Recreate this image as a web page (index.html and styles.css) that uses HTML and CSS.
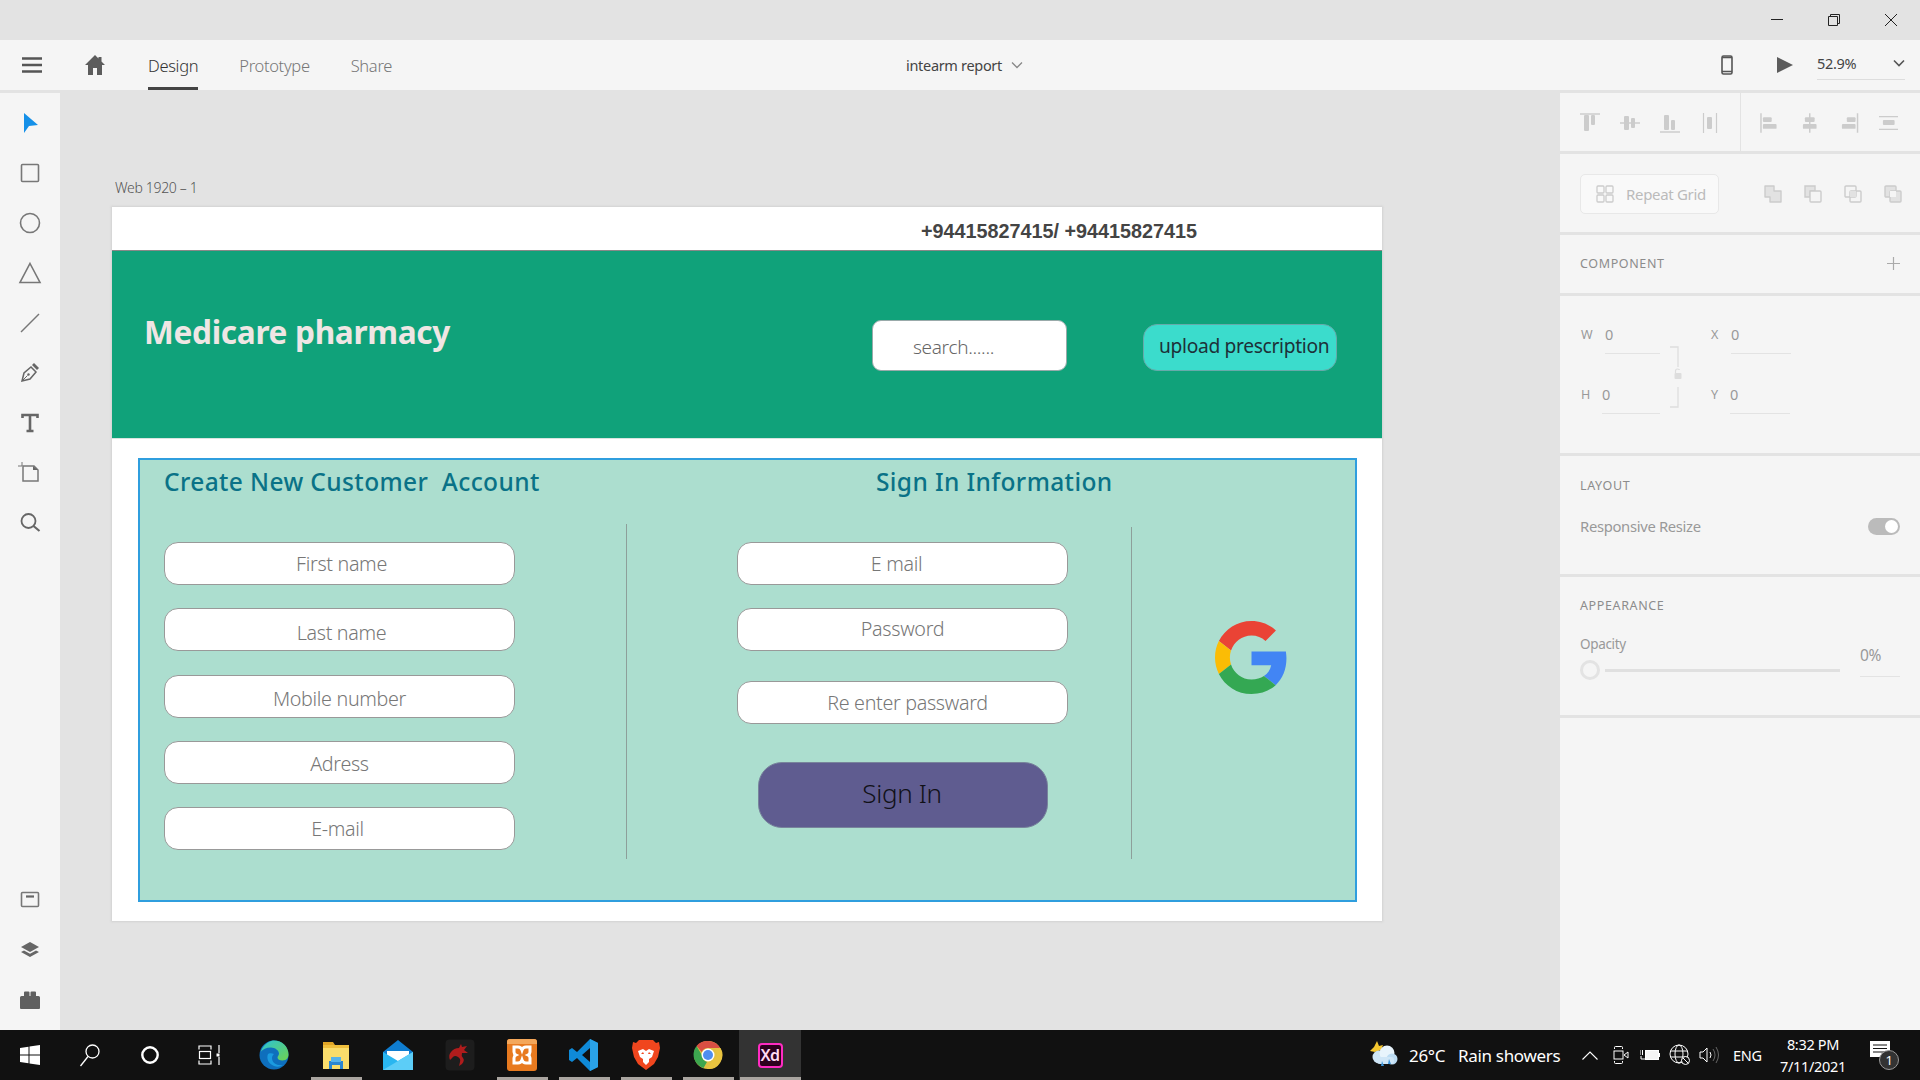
FILE: index.html
```html
<!DOCTYPE html>
<html lang="en">
<head>
<meta charset="utf-8">
<title>intearm report - Adobe XD</title>
<link rel="stylesheet" href="styles.css">
</head>
<body>
<div class="app">
  <header class="titlebar">
    <svg class="win-ctl" width="14" height="14" viewBox="0 0 14 14"><path d="M1 6.5h12" stroke="#222" fill="none"/></svg>
    <svg class="win-ctl" width="14" height="14" viewBox="0 0 14 14"><path d="M1.5 3.5h9v9h-9zM3.5 3.5v-2h9v9h-2" stroke="#222" fill="none"/></svg>
    <svg class="win-ctl" width="14" height="14" viewBox="0 0 14 14"><path d="M1 1l12 12M13 1L1 13" stroke="#222" fill="none"/></svg>
  </header>

  <nav class="topbar">
    <svg class="hamburger" width="20" height="16" viewBox="0 0 20 16"><path d="M0 1.5h20M0 8h20M0 14.5h20" stroke="#555" stroke-width="2.4"/></svg>
    <svg class="home" width="22" height="22" viewBox="0 0 22 22"><path d="M11 1L1 11h3v10h5v-7h4v7h5V11h3l-3.5-3.5V3h-3v1.5z" fill="#5c5c5c"/></svg>
    <div class="tabs">
      <a class="tab tab-active">Design</a>
      <a class="tab">Prototype</a>
      <a class="tab">Share</a>
    </div>
    <div class="doc-title">intearm report
      <svg width="12" height="8" viewBox="0 0 12 8"><path d="M1 1.5l5 5 5-5" stroke="#888" stroke-width="1.3" fill="none"/></svg>
    </div>
    <div class="top-right">
      <svg class="device" width="12" height="20" viewBox="0 0 12 20"><rect x="1" y="1" width="10" height="18" rx="1.5" fill="none" stroke="#555" stroke-width="1.6"/><path d="M1 2.5h10M1 16.5h10" stroke="#555" stroke-width="1.6"/></svg>
      <svg class="play" width="16" height="18" viewBox="0 0 16 18"><path d="M0 1l16 8-16 8z" fill="#5c5c5c"/></svg>
      <div class="zoom-box">52.9%
        <svg width="12" height="8" viewBox="0 0 12 8"><path d="M1 1.5l5 5 5-5" stroke="#555" stroke-width="1.6" fill="none"/></svg>
      </div>
    </div>
  </nav>

  <div class="workspace">
    <aside class="tools">
      <div class="tool-group">
        <svg class="tool" width="24" height="24" viewBox="0 0 24 24"><path d="M6 2L20 14L11 15L6 22z" fill="#1590e8"/></svg>
        <svg class="tool" width="24" height="24" viewBox="0 0 24 24"><rect x="3.5" y="3.5" width="17" height="17" rx="1" fill="none" stroke="#777" stroke-width="1.6"/></svg>
        <svg class="tool" width="24" height="24" viewBox="0 0 24 24"><circle cx="12" cy="12" r="9.5" fill="none" stroke="#777" stroke-width="1.6"/></svg>
        <svg class="tool" width="24" height="24" viewBox="0 0 24 24"><path d="M12 2.5L22 21.5H2z" fill="none" stroke="#777" stroke-width="1.6"/></svg>
        <svg class="tool" width="24" height="24" viewBox="0 0 24 24"><path d="M3 21L21 3" stroke="#777" stroke-width="1.4"/></svg>
        <svg class="tool" width="24" height="24" viewBox="0 0 24 24"><path d="M4 20l2-8 7-6 5 5-6 7z" fill="none" stroke="#666" stroke-width="1.5"/><path d="M14 4l2-2 5 5-2 2z" fill="#666"/><circle cx="10.5" cy="13.5" r="1.2" fill="#666"/><path d="M4 20l5.5-5.5" stroke="#666"/></svg>
        <svg class="tool" width="24" height="24" viewBox="0 0 24 24"><path d="M4.5 7V4h15v3M12 4v16M8.500 20h7" fill="none" stroke="#666" stroke-width="2.6"/></svg>
        <svg class="tool" width="24" height="24" viewBox="0 0 24 24"><path d="M5 5h11l4 4v11H5z" fill="none" stroke="#777" stroke-width="1.5"/><path d="M15 5l5 4h-5z" fill="#666"/><path d="M0 5h4M4 1v4" stroke="#777"/></svg>
        <svg class="tool" width="24" height="24" viewBox="0 0 24 24"><circle cx="10.5" cy="10" r="7" fill="none" stroke="#666" stroke-width="1.8"/><path d="M15.5 15l6 5" stroke="#666" stroke-width="2.2"/></svg>
      </div>
      <div class="tool-group">
        <svg class="tool" width="24" height="24" viewBox="0 0 24 24"><rect x="3.5" y="4.5" width="17" height="14" rx="1" fill="none" stroke="#777" stroke-width="1.6"/><path d="M8 8.500h8" stroke="#666" stroke-width="2.2"/></svg>
        <svg class="tool" width="24" height="24" viewBox="0 0 24 24"><path d="M12 4l9 5-9 5-9-5z" fill="#666"/><path d="M3 14l3-1.5 6 3.3 6-3.3 3 1.5-9 5z" fill="#666"/></svg>
        <svg class="tool" width="24" height="24" viewBox="0 0 24 24"><path d="M2 9.500q0-1.500 1.500-1.500H6V4.500q0-1 1-1h3.500q1 0 1 1V8h1V4.500q0-1 1-1H17q1 0 1 1V8h2.500Q22 8 22 9.500V20q0 1-1 1H3q-1 0-1-1z" fill="#5f5f5f"/></svg>
      </div>
    </aside>

    <main class="canvas">
      <div class="artboard-label">Web 1920 – 1</div>
      <section class="artboard">
        <div class="contact"><span>+94415827415/ +94415827415</span></div>
        <div class="hero">
          <h1 class="brand">Medicare pharmacy</h1>
          <div class="search">search......</div>
          <div class="upload">upload prescription</div>
        </div>
        <div class="form-wrap">
          <div class="form-panel">
            <h2 class="form-heading heading-left">Create New Customer&nbsp; Account</h2>
            <h2 class="form-heading heading-mid">Sign In Information</h2>
            <div class="form-spacer"></div>
            <div class="col col-left">
              <div class="field"><span class="ph ph-first">First name</span></div>
              <div class="field"><span class="ph ph-last">Last name</span></div>
              <div class="field"><span class="ph ph-mobile">Mobile number</span></div>
              <div class="field"><span class="ph ph-adress">Adress</span></div>
              <div class="field"><span class="ph ph-email">E-mail</span></div>
            </div>
            <div class="col col-mid">
              <div class="field field-wide"><span class="ph ph-mail2">E mail</span></div>
              <div class="field field-wide"><span class="ph ph-pass">Password</span></div>
              <div class="field field-wide field-re"><span class="ph ph-re">Re enter passward</span></div>
              <div class="signin"><span class="signin-text">Sign In</span></div>
            </div>
            <div class="col col-right">
              <svg width="73" height="73" viewBox="0 0 48 48">
                <path fill="#EA4335" d="M24 9.5c3.54 0 6.71 1.22 9.21 3.6l6.85-6.85C35.9 2.38 30.47 0 24 0 14.62 0 6.51 5.38 2.56 13.22l7.98 6.19C12.43 13.72 17.74 9.5 24 9.5z"/>
                <path fill="#4285F4" d="M46.98 24.55c0-1.57-.15-3.09-.38-4.55H24v9.02h12.94c-.58 2.96-2.26 5.48-4.78 7.18l7.73 6c4.51-4.18 7.09-10.36 7.09-17.65z"/>
                <path fill="#FBBC05" d="M10.53 28.59c-.48-1.45-.76-2.99-.76-4.59s.27-3.14.76-4.59l-7.98-6.19C.92 16.46 0 20.12 0 24c0 3.88.92 7.54 2.56 10.78l7.97-6.19z"/>
                <path fill="#34A853" d="M24 48c6.48 0 11.93-2.13 15.89-5.81l-7.73-6c-2.15 1.45-4.92 2.3-8.16 2.3-6.26 0-11.57-4.22-13.47-9.91l-7.98 6.19C6.51 42.62 14.62 48 24 48z"/>
              </svg>
            </div>
          </div>
        </div>
      </section>
    </main>

    <aside class="inspector">
      <div class="sec sec-align">
        <div class="align-group">
          <svg class="ic" width="20" height="20" viewBox="0 0 20 20"><path d="M0 1h20" stroke="#ccc" stroke-width="1.5"/><rect x="4" y="2" width="5" height="16" rx="1" fill="#ccc"/><rect x="11" y="2" width="4" height="10" rx="1" fill="#ccc"/></svg>
          <svg class="ic" width="20" height="20" viewBox="0 0 20 20"><path d="M0 10h20" stroke="#ccc" stroke-width="1.5"/><rect x="4" y="3" width="5" height="14" rx="1" fill="#ccc"/><rect x="11" y="5" width="4" height="10" rx="1" fill="#ccc"/></svg>
          <svg class="ic" width="20" height="20" viewBox="0 0 20 20"><path d="M0 19h20" stroke="#ccc" stroke-width="1.5"/><rect x="4" y="2" width="5" height="15" rx="1" fill="#ccc"/><rect x="11" y="7" width="4" height="10" rx="1" fill="#ccc"/></svg>
          <svg class="ic" width="20" height="20" viewBox="0 0 20 20"><path d="M3.5 0v20M16.5 0v20" stroke="#ccc" stroke-width="1.2"/><rect x="7" y="4" width="5" height="12" rx="1" fill="#ccc"/></svg>
        </div>
        <div class="align-group align-group-right">
          <svg class="ic" width="20" height="20" viewBox="0 0 20 20"><path d="M1 0v20" stroke="#ccc" stroke-width="1.5"/><rect x="3" y="4" width="9" height="5" rx="1" fill="#ccc"/><rect x="3" y="11" width="14" height="5" rx="1" fill="#ccc"/></svg>
          <svg class="ic" width="20" height="20" viewBox="0 0 20 20"><path d="M10 0v20" stroke="#ccc" stroke-width="1.5"/><rect x="5" y="4" width="10" height="5" rx="1" fill="#ccc"/><rect x="3" y="11" width="14" height="5" rx="1" fill="#ccc"/></svg>
          <svg class="ic" width="20" height="20" viewBox="0 0 20 20"><path d="M19 0v20" stroke="#ccc" stroke-width="1.5"/><rect x="8" y="4" width="9" height="5" rx="1" fill="#ccc"/><rect x="3" y="11" width="14" height="5" rx="1" fill="#ccc"/></svg>
          <svg class="ic" width="20" height="20" viewBox="0 0 20 20"><path d="M0 3.5h20M0 16.5h20" stroke="#ccc" stroke-width="1.2"/><rect x="4" y="7" width="12" height="5" rx="1" fill="#ccc"/></svg>
        </div>
      </div>

      <div class="sec sec-grid">
        <div class="repeat">
          <svg width="18" height="18" viewBox="0 0 18 18"><g fill="none" stroke="#ccc" stroke-width="1.3"><rect x="1" y="1" width="7" height="7" rx="1"/><rect x="10" y="1" width="7" height="7" rx="1"/><rect x="1" y="10" width="7" height="7" rx="1"/><rect x="10" y="10" width="7" height="7" rx="1"/></g></svg>
          Repeat Grid
        </div>
        <div class="bools">
          <svg class="ic" width="20" height="20" viewBox="0 0 20 20"><path d="M2 2h9v5h7v11H7v-5H2z" fill="#e2e2e2" stroke="#ccc" stroke-width="1.4" stroke-linejoin="round"/></svg>
          <svg class="ic" width="20" height="20" viewBox="0 0 20 20"><path d="M2 2h10v5H7v6H2z" fill="#e2e2e2" stroke="#ccc" stroke-width="1.4"/><rect x="7" y="7" width="11" height="11" rx="1" fill="#f5f5f5" stroke="#ccc" stroke-width="1.4"/></svg>
          <svg class="ic" width="20" height="20" viewBox="0 0 20 20"><g fill="none" stroke="#ccc" stroke-width="1.4"><rect x="2" y="2" width="11" height="11" rx="1"/><rect x="7" y="7" width="11" height="11" rx="1"/></g><rect x="7" y="7" width="6" height="6" fill="#e2e2e2"/></svg>
          <svg class="ic" width="20" height="20" viewBox="0 0 20 20"><rect x="2" y="2" width="11" height="11" rx="1" fill="#e2e2e2" stroke="#ccc" stroke-width="1.4"/><rect x="7" y="7" width="11" height="11" rx="1" fill="#e2e2e2" stroke="#ccc" stroke-width="1.4"/><rect x="7" y="7" width="6" height="6" fill="#f5f5f5"/></svg>
        </div>
      </div>

      <div class="sec sec-component">
        <span class="sec-label">COMPONENT</span>
        <svg width="13" height="13" viewBox="0 0 13 13"><path d="M6.5 0v13M0 6.5h13" stroke="#aaa" stroke-width="1.2"/></svg>
      </div>

      <div class="sec sec-transform">
        <div class="tf-field"><span class="tf-label tf-w">W</span><span class="tf-val tf-val-a">0</span></div>
        <div class="tf-field"><span class="tf-label tf-x">X</span><span class="tf-val tf-val-b">0</span></div>
        <div class="tf-field"><span class="tf-label tf-h">H</span><span class="tf-val tf-val-c">0</span></div>
        <div class="tf-field"><span class="tf-label tf-y">Y</span><span class="tf-val tf-val-b">0</span></div>
        <svg class="tf-lock" width="22" height="62" viewBox="0 0 22 62"><path d="M10 1h8v20M18 41v20h-8" fill="none" stroke="#ddd" stroke-width="1.3"/><rect x="14.5" y="27" width="7" height="6" rx="1" fill="#ddd"/><path d="M15.5 27v-2q0-2 2-2t2 1" fill="none" stroke="#ddd" stroke-width="1.2"/></svg>
      </div>

      <div class="sec sec-layout">
        <span class="sec-label">LAYOUT</span>
        <div class="row-between">
          <span class="resp">Responsive Resize</span>
          <span class="toggle"><span class="knob"></span></span>
        </div>
      </div>

      <div class="sec sec-appearance">
        <span class="sec-label">APPEARANCE</span>
        <span class="opacity">Opacity</span>
        <div class="slider-row">
          <span class="slider-knob"></span>
          <span class="slider-track"></span>
          <span class="opacity-val">0%</span>
        </div>
      </div>
    </aside>
  </div>

  <footer class="taskbar">
    <div class="task-cell task-narrow"><svg width="20" height="20" viewBox="0 0 20 20"><path d="M0 3l8.5-1.2v7.700H0zM9.5 1.600L20 0v9.5H9.5zM0 10.5h8.5v7.700L0 17zM9.5 10.5H20V20L9.5 18.400z" fill="#fff"/></svg></div>
    <div class="task-cell task-narrow"><svg width="22" height="24" viewBox="0 0 22 24"><circle cx="13.5" cy="8.5" r="6.5" fill="none" stroke="#fff" stroke-width="1.3"/><path d="M9 13.500L1.500 23" stroke="#fff" stroke-width="1.3"/></svg></div>
    <div class="task-cell task-narrow"><svg width="20" height="20" viewBox="0 0 20 20"><circle cx="10" cy="10" r="7.7" fill="none" stroke="#fff" stroke-width="2.4"/></svg></div>
    <div class="task-cell task-view"><svg class="taskview-ic" width="22" height="20" viewBox="0 0 22 20"><path d="M1 4.5V1h12v3.500M1 15.500V19h12v-3.500M21 0v8M21 12v8" fill="none" stroke="#fff" stroke-width="1.2"/><rect x="1.5" y="6.5" width="11" height="7" fill="none" stroke="#fff" stroke-width="1.2"/><rect x="18.500" y="8.500" width="3" height="3" fill="#fff"/></svg></div>

    <div class="task-cell"><svg width="30" height="30" viewBox="0 0 30 30"><defs><linearGradient id="edgeA" x1="0" y1="0" x2="1" y2="1"><stop offset="0" stop-color="#2bc2d8"/><stop offset="1" stop-color="#6fd44e"/></linearGradient></defs><circle cx="15" cy="15" r="14.500" fill="#0e6fbd"/><path d="M2 11C5 3 12 .5 15 .5c8 0 14.500 6 14.500 14 0 3-2 6-6 6-3 0-5-1-5-3 0-1.500 1.500-2 1.500-4 0-3-4-6-8-6-5 0-8 2-10 4z" fill="url(#edgeA)"/><path d="M9 14c-2 5 1 10 6 12 3 1 6 1 9-1-6 1-11-2-11-7 0-2 1-3 2-4-2-1-5-1-6 0z" fill="#1a9be0"/></svg></div>
    <div class="task-cell task-open"><svg width="28" height="30" viewBox="0 0 28 30"><path d="M1 2h10l2 3H1z" fill="#e0a526"/><path d="M1 5h26v24H1z" fill="#fadd6b"/><path d="M1 5h26v3H1z" fill="#f0bf3c"/><path d="M7 29v-8h14v8h-3v-4h-8v4z" fill="#2d86cf"/><rect x="9" y="17" width="10" height="5" fill="#57b3ea"/></svg></div>
    <div class="task-cell"><svg width="30" height="30" viewBox="0 0 30 30"><path d="M15 0l15 12v18H0V12z" fill="#0f7dd0"/><path d="M4 11h22v5l-11 6-11-6z" fill="#fff"/><path d="M0 12l15 9 15-9v18H0z" fill="#29b6f0"/><path d="M30 12v18H0z" fill="#5ccdf7"/></svg></div>
    <div class="task-cell"><svg width="30" height="32" viewBox="0 0 30 32"><rect x="0.5" y="0.500" width="29" height="31" rx="4" fill="#1d1d1d"/><path d="M6 13q3-4 8-4l2-4 1 3 5-1-3 4 4 3-6 0q-1 3 1 5t-1 6l-3 2 1-4q1-3-2-5t-5 0l-3 3q-2-5 1-8z" fill="#b01c1c"/></svg></div>
    <div class="task-cell task-open"><svg width="30" height="32" viewBox="0 0 30 32"><rect width="30" height="32" rx="3" fill="#e87a1f"/><path d="M0 3q0-3 3-3h24q3 0 3 3v2H0z" fill="#f4a75a"/><path d="M7 8h4q3 0 4 3 1-3 4-3h4v5q0 2-2 3 2 1 2 3v5h-4q-3 0-4-3-1 3-4 3H7v-5q0-2 2-3-2-1-2-3z" fill="none" stroke="#fff" stroke-width="3"/></svg></div>
    <div class="task-cell task-open"><svg width="30" height="32" viewBox="0 0 30 32"><path d="M21 0l8 4v24l-8 4-13-13-5 4-3-2V11l3-2 5 4zM21 9l-8 7 8 7z" fill="#0f8ad8" fill-rule="evenodd"/><path d="M21 0l8 4v24l-8 4z" fill="#2aa3ea"/></svg></div>
    <div class="task-cell task-open"><svg width="28" height="32" viewBox="0 0 28 32"><path d="M7 1h14l3 3 3-1 1 6-2 9-4 7-8 6-8-6-4-7-2-9 1-6 3 1z" fill="#f0461e"/><path d="M6 12l5-2 3 2 3-2 5 2-2 6-3 2v3l-3 3-3-3v-3l-3-2z" fill="#fff"/><path d="M11 13l-2 2h3zM17 13l2 2h-3z" fill="#f0461e"/></svg></div>
    <div class="task-cell task-open"><svg width="30" height="30" viewBox="0 0 30 30"><circle cx="15" cy="15" r="14" fill="#e2c042"/><path d="M15 1a14 14 0 0 1 12.100 7H15a7 7 0 0 0-6.300 4L3.500 6A14 14 0 0 1 15 1z" fill="#d94f43"/><path d="M3.500 6l5.600 9.600A7 7 0 0 0 14 22l-3.500 6A14 14 0 0 1 3.500 6z" fill="#3da64f"/><path d="M14 29l6-9a7 7 0 0 0 1-12h6.500A14 14 0 0 1 14 29z" fill="#e9c33f"/><circle cx="15" cy="15" r="6.5" fill="#fff"/><circle cx="15" cy="15" r="5" fill="#4f8ef0"/></svg></div>
    <div class="task-cell task-xd"><span class="xd-logo">Xd</span></div>

    <div class="tray">
      <svg class="tray-weather" width="30" height="30" viewBox="0 0 30 30"><path d="M8 1l2 5 4-1-2 5-6 2-5-1 4-4z" fill="#f3c62f"/><circle cx="10" cy="17" r="6.5" fill="#cfe6f7"/><circle cx="18" cy="13" r="7.5" fill="#e8f4fc"/><circle cx="23" cy="19" r="5.5" fill="#bcdcf3"/><rect x="8" y="17" width="17" height="7" rx="3" fill="#cfe6f7"/><path d="M13 21l2 5h-3zM20 19l2 5h-3z" fill="#3c96dc"/></svg>
      <span class="tray-temp">26°C</span>
      <span class="tray-weather-text">Rain showers</span>
      <svg class="tray-chevron" width="16" height="9" viewBox="0 0 16 9"><path d="M.5 8.500L8 1l7.500 7.500" stroke="#fff" fill="none" stroke-width="1.1"/></svg>
      <svg class="tray-meet" width="16" height="20" viewBox="0 0 16 20"><path d="M1.500 4V2.500q0-1 1-1h6q1 0 1 1V4M1.500 16v1.500q0 1 1 1h6q1 0 1-1V16" stroke="#fff" fill="none"/><rect x="1" y="6" width="9" height="8" fill="none" stroke="#fff"/><path d="M11 10l4-3v6z" fill="none" stroke="#fff"/></svg>
      <svg class="tray-battery" width="20" height="14" viewBox="0 0 20 14"><path d="M0 2v5M2.500 2v5M1 8v3h5" stroke="#fff" fill="none"/><rect x="5.500" y="2.500" width="13" height="9" fill="#f5f5f5" stroke="#fff"/><rect x="18.500" y="5" width="1.500" height="4" fill="#fff"/></svg>
      <svg class="tray-globe" width="22" height="22" viewBox="0 0 22 22"><g fill="none" stroke="#fff"><circle cx="10" cy="10" r="9"/><ellipse cx="10" cy="10" rx="4" ry="9"/><path d="M1.500 7h17M1.500 13h17"/></g><circle cx="16.500" cy="16.500" r="4" fill="#111" stroke="#fff"/><path d="M14 14l5 5" stroke="#fff"/></svg>
      <svg class="tray-volume" width="22" height="20" viewBox="0 0 22 20"><path d="M1 7h3l4-4v14l-4-4H1z" fill="none" stroke="#fff"/><path d="M11 7q2 3 0 6" fill="none" stroke="#fff"/><path d="M14 4q4 6 0 12M17 2q5 8 0 16" fill="none" stroke="#666"/></svg>
      <span class="tray-lang">ENG</span>
      <div class="clock"><span>8:32 PM</span><span>7/11/2021</span></div>
      <div class="notif">
        <svg width="20" height="17" viewBox="0 0 20 17"><path d="M0 0h20v16H0z" fill="#fff"/><path d="M3 4h14M3 7.500h14M3 11h14" stroke="#111" stroke-width="1.2"/></svg>
        <span class="notif-badge">1</span>
      </div>
    </div>
  </footer>
</div>
</body>
</html>
```

FILE: styles.css
```css
* { box-sizing: border-box; }
html, body { margin: 0; padding: 0; }
body {
  width: 1920px;
  height: 1080px;
  overflow: hidden;
  font-family: "Noto Sans", "Open Sans", sans-serif;
  letter-spacing: -0.02em;
  color: #444;
}
.app { display: flex; flex-direction: column; height: 1080px; background: #e3e3e3; }

/* title bar */
.titlebar {
  height: 40px;
  flex: none;
  background: #e3e3e3;
  display: flex;
  justify-content: flex-end;
  align-items: center;
  gap: 43px;
  padding-right: 22px;
}

/* top bar */
.topbar {
  height: 50px;
  flex: none;
  background: #f5f5f5;
  display: flex;
  align-items: center;
}
.hamburger { margin-left: 22px; }
.home { margin-left: 42px; }
.tabs { display: flex; margin-left: 42px; align-self: stretch; }
.tab {
  display: flex;
  align-items: center;
  font-size: 16.5px;
  font-weight: 300;
  color: #777;
  margin-right: 41px;
  border-bottom: 3px solid transparent;
  padding-top: 4px;
}
.tab-active { color: #333; border-bottom-color: #444; }
.doc-title {
  margin-left: 473px;
  font-size: 14.5px;
  color: #444;
  display: flex;
  align-items: center;
  gap: 9px;
}
.top-right { margin-left: auto; display: flex; align-items: center; }
.device { margin-right: 44px; }
.play { margin-right: 24px; }
.zoom-box {
  width: 88px;
  height: 30px;
  margin-right: 15px;
  border-bottom: 1px solid #ddd;
  font-size: 14.5px;
  color: #444;
  display: flex;
  justify-content: space-between;
  align-items: center;
  padding-bottom: 3px;
}

.workspace { flex: 1; display: flex; margin-top: 3px; min-height: 0; }

/* left tools */
.tools {
  width: 60px;
  flex: none;
  background: #f5f5f5;
  display: flex;
  flex-direction: column;
  justify-content: space-between;
  padding: 18px 0;
}
.tool-group { display: flex; flex-direction: column; align-items: center; gap: 26px; }
.tool { display: block; }

/* canvas */
.canvas { flex: 1; padding: 86px 0 0 52px; }
.artboard-label { font-size: 14px; font-weight: 300; color: #555; height: 28px; margin-left: 3px; line-height: 18px; }
.artboard {
  width: 1270px;
  height: 714px;
  background: #fff;
  box-shadow: 0 0 2px 1px #d2d2d2;
}
.contact {
  height: 44px;
  border-bottom: 1px solid #888;
  padding-left: 809px;
  font-family: "Liberation Sans", Arial, sans-serif;
  font-weight: 700;
  font-size: 19.8px;
  letter-spacing: 0;
  line-height: 48px;
  color: #444;
}
.hero {
  height: 188px;
  background: #10a27a;
  display: flex;
  align-items: flex-start;
  padding: 69px 45px 0 32px;
  border-bottom: 1px solid #d9e4e0;
}
.brand {
  margin: -3px 0 0;
  font-size: 31.6px;
  line-height: 30px;
  font-weight: 700;
  color: #efe6e4;
}
.search {
  margin-left: auto;
  width: 195px;
  height: 51px;
  background: #fff;
  border: 1px solid #9aa;
  border-radius: 9px;
  font-size: 19px;
  font-weight: 300;
  color: #666;
  padding: 12px 0 0 40px;
  line-height: 28px;
}
.upload {
  width: 194px;
  height: 47px;
  margin: 4px 0 0 76px;
  background: #3bdccc;
  border: 1px solid #6aa;
  border-radius: 14px;
  font-size: 19.2px;
  color: #1d3138;
  padding-left: 15px;
  line-height: 42px;
}

/* form */
.form-wrap { padding: 19px 25px 0 26px; }
.form-panel {
  height: 444px;
  background: #acdecf;
  border: 2px solid #2f9ede;
  display: grid;
  grid-template-columns: 486px 505px 1fr;
  grid-template-rows: 64px 335px;
}
.form-heading {
  margin: 0;
  font-size: 24.5px;
  font-weight: 500;
  letter-spacing: 0.016em;
  color: #0a7287;
  line-height: 44px;
}
.heading-left { padding-left: 24px; }
.heading-mid { padding-left: 250px; }
.col { display: flex; flex-direction: column; }
.col-left { padding: 18px 0 0 24px; gap: 23.25px; }
.col-mid { border-left: 1px solid #8d9f9a; padding: 18px 0 0 110px; gap: 23px; }
.col-right {
  margin-top: 3px;
  border-left: 1px solid #8d9f9a;
  padding: 94px 0 0 83px;
}
.field {
  width: 351px;
  height: 43px;
  background: #fff;
  border: 1px solid #999;
  border-radius: 14px;
  display: flex;
  align-items: center;
  justify-content: center;
  font-size: 19.7px;
  font-weight: 300;
  color: #777;
}
.field-wide { width: 331px; }
.field-re { margin-top: 7px; }
.ph { position: relative; }
.ph-first { left: 2px; }
.ph-last { left: 2px; top: 3px; }
.ph-mobile { top: 2px; }
.ph-adress { top: 1px; }
.ph-email { left: -2px; }
.ph-mail2 { left: -6px; }
.ph-pass { top: -1px; }
.ph-re { left: 5px; }
.signin {
  width: 290px;
  height: 66px;
  margin: 15px 0 0 21px;
  background: #5f5c90;
  border: 1px solid #78849c;
  border-radius: 24px;
  display: flex;
  align-items: center;
  justify-content: center;
  font-size: 26px;
  font-weight: 300;
  color: #111118;
}
.signin-text { position: relative; top: -2px; left: -1px; }

/* inspector */
.inspector {
  width: 360px;
  flex: none;
  background: #f5f5f5;
  display: flex;
  flex-direction: column;
}
.sec { border-bottom: 3px solid #e3e3e3; flex: none; }
.ic { display: block; }
.sec-align { height: 61px; display: flex; }
.align-group {
  width: 180px;
  display: flex;
  align-items: center;
  justify-content: space-between;
  padding: 2px 20px 0;
  gap: 20px;
}
.align-group-right { border-left: 1px solid #e3e3e3; padding: 2px 22px 0 19px; }
.sec-grid {
  height: 81px;
  display: flex;
  align-items: center;
  justify-content: space-between;
  padding: 2px 17px 0 20px;
}
.repeat {
  width: 139px;
  height: 40px;
  border: 1px solid #e8e8e8;
  border-radius: 5px;
  background: #f9f9f9;
  display: flex;
  align-items: center;
  gap: 12px;
  padding-left: 15px;
  font-size: 15px;
  color: #bbb;
}
.bools { display: flex; gap: 20px; }
.sec-component {
  height: 61px;
  display: flex;
  align-items: center;
  justify-content: space-between;
  padding: 0 20px 2px;
}
.sec-label { font-size: 12.5px; letter-spacing: 0.05em; color: #8c8c8c; }
.sec-transform {
  height: 160px;
  display: grid;
  grid-template-columns: 130px 80px;
  grid-auto-rows: 30px;
  row-gap: 30px;
  padding: 28px 0 0 21px;
  position: relative;
}
.tf-field { display: flex; align-items: flex-start; }
.tf-label { font-size: 12.5px; color: #999; line-height: 22px; }
.tf-w { width: 24px; }
.tf-h { width: 21px; }
.tf-x { width: 20px; }
.tf-y { width: 19px; }
.tf-val {
  height: 30px;
  border-bottom: 1px solid #e3e3e3;
  font-size: 14.5px;
  color: #999;
  line-height: 20px;
}
.tf-val-a { width: 55px; }
.tf-val-b { width: 60px; }
.tf-val-c { width: 58px; }
.tf-lock { position: absolute; left: 100px; top: 50px; }
.sec-layout { height: 121px; padding: 17px 20px 0; }
.row-between { display: flex; justify-content: space-between; align-items: center; margin-top: 21px; }
.resp { font-size: 14.8px; color: #999; }
.toggle {
  width: 32px;
  height: 17px;
  border-radius: 9px;
  background: #bbb;
  display: flex;
  justify-content: flex-end;
  align-items: center;
  padding-right: 2px;
}
.knob { width: 13px; height: 13px; border-radius: 50%; background: #fff; }
.sec-appearance {
  height: 141px;
  padding: 20px 20px 0;
  display: flex;
  flex-direction: column;
}
.opacity { font-size: 13.5px; color: #999; margin-top: 21px; }
.slider-row { display: flex; align-items: center; margin-top: 3px; position: relative; height: 28px; }
.slider-knob { width: 20px; height: 20px; border-radius: 50%; border: 3px solid #e3e3e3; flex: none; }
.slider-track { width: 235px; height: 3px; background: #e0e0e0; margin-left: 5px; }
.opacity-val {
  position: absolute;
  left: 280px;
  top: -14px;
  width: 40px;
  height: 35px;
  border-bottom: 1px solid #e3e3e3;
  font-size: 15.5px;
  color: #999;
  line-height: 26px;
}

/* taskbar */
.taskbar {
  height: 50px;
  flex: none;
  background: #111;
  display: flex;
  align-items: stretch;
}
.task-cell {
  flex: none;
  width: 62px;
  display: flex;
  align-items: center;
  justify-content: center;
  position: relative;
}
.task-narrow { width: 60px; }
.task-view { width: 63px; }
.taskview-ic { margin-right: 5px; }
.task-open::after {
  content: "";
  position: absolute;
  left: 6px;
  right: 5px;
  bottom: 0;
  height: 3px;
  background: #aaa5a0;
}
.task-xd { background: #333; }
.task-xd::after {
  content: "";
  position: absolute;
  left: 1px;
  right: 0;
  bottom: 0;
  height: 3px;
  background: #aaa5a0;
}
.xd-logo {
  width: 25px;
  height: 25px;
  background: #2e001e;
  border: 2px solid #ff2bc2;
  border-radius: 4px;
  font-size: 16px;
  font-weight: 600;
  letter-spacing: -0.04em;
  color: #ffd9f2;
  display: flex;
  align-items: center;
  justify-content: center;
}
.tray { flex: 1; min-width: 0; display: flex; align-items: center; color: #fff; position: relative; }
.tray-weather { margin-left: 568px; flex: none; }
.tray-temp { margin-left: 10px; font-size: 17px; width: 49px; flex: none; }
.tray-weather-text { font-size: 17px; width: 103px; flex: none; white-space: nowrap; }
.tray-chevron { margin-left: 21px; flex: none; }
.tray-meet { margin-left: 15px; flex: none; }
.tray-battery { margin-left: 11px; flex: none; }
.tray-globe { margin-left: 9px; flex: none; }
.tray-volume { margin-left: 8px; flex: none; }
.tray-lang { margin-left: 12px; font-size: 14.5px; width: 30px; flex: none; }
.clock {
  margin-left: 14px;
  width: 72px;
  flex: none;
  display: flex;
  flex-direction: column;
  align-items: center;
  font-size: 14.5px;
  gap: 2px;
  line-height: 20px;
  white-space: nowrap;
}
.notif { margin-left: 21px; position: relative; width: 24px; height: 30px; flex: none; margin-top: -4px; }
.notif svg { display: block; margin-top: 3px; }
.notif-badge {
  position: absolute;
  left: 9px;
  top: 12px;
  width: 20px;
  height: 20px;
  border-radius: 50%;
  background: #333;
  border: 1px solid #999;
  font-size: 13px;
  line-height: 18px;
  text-align: center;
  color: #fff;
}
```
